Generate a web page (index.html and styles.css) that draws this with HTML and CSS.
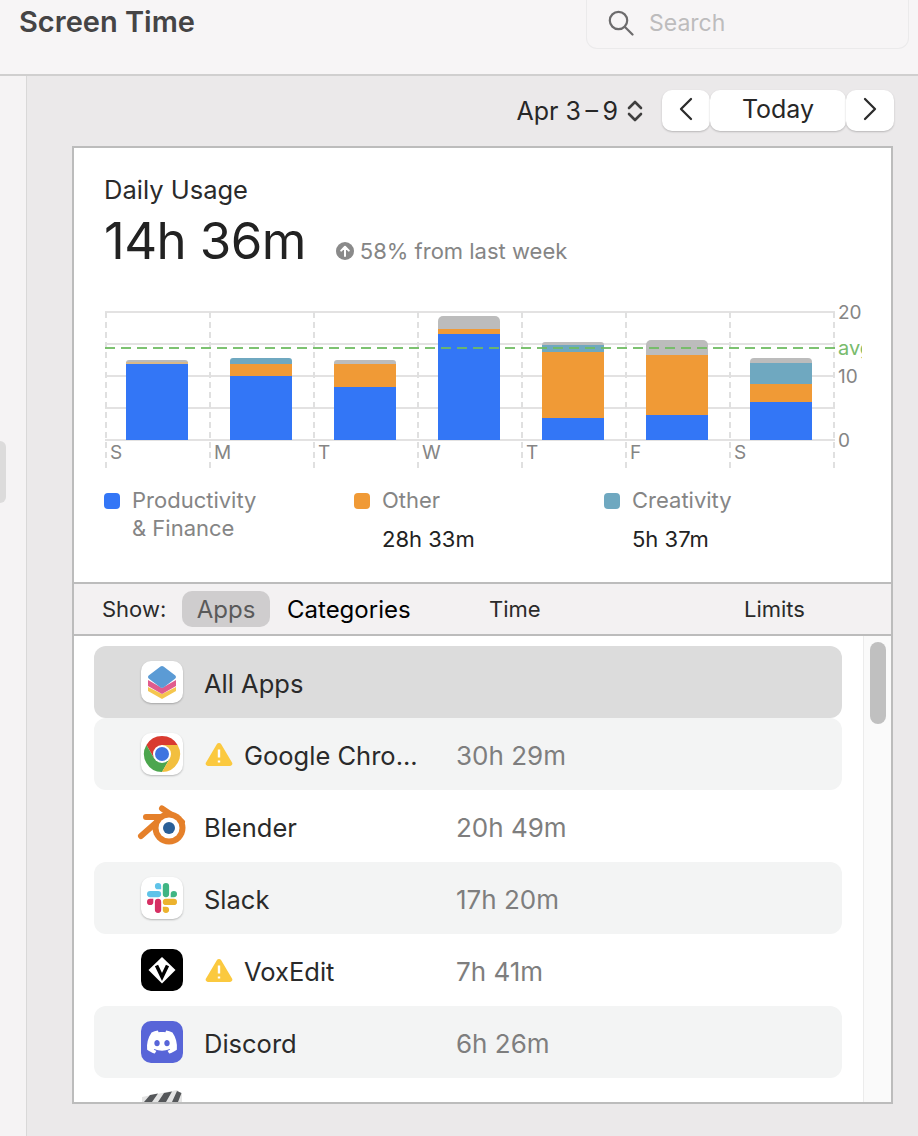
FILE: index.html
```html
<!DOCTYPE html>
<html lang="en">
<head>
<meta charset="utf-8">
<title>Screen Time</title>
<link rel="stylesheet" href="styles.css">
</head>
<body>
<header class="titlebar">
  <h1 class="title">Screen Time</h1>
  <div class="search">
    <svg class="search-icon" viewBox="0 0 26 26"><circle cx="10.5" cy="10.5" r="8.7"/><path d="M17 17l7.5 7.5"/></svg>
    <span>Search</span>
  </div>
</header>
<div class="window">
  <aside class="sidebar"><div class="sidebar-sel"></div></aside>
  <main class="content">
    <div class="toolbar">
      <span class="range">Apr 3&#8201;–&#8201;9</span>
      <svg class="stepper" viewBox="0 0 16 22"><path d="M2 8l6-6 6 6M2 14l6 6 6-6"/></svg>
      <button class="btn btn-icon"><svg viewBox="0 0 14 24"><path d="M12 2L2 12l10 10"/></svg></button>
      <button class="btn btn-today">Today</button>
      <button class="btn btn-icon"><svg viewBox="0 0 14 24"><path d="M2 2l10 10L2 22"/></svg></button>
    </div>
    <section class="card">
      <div class="usage">
        <div class="usage-title">Daily Usage</div>
        <div class="usage-line">
          <span class="usage-total">14h 36m</span>
          <svg class="delta-icon" viewBox="0 0 18 18"><circle cx="9" cy="9" r="9"/><path d="M9 14V5M5.2 8.6L9 4.8l3.8 3.8"/></svg>
          <span class="delta">58% from last week</span>
        </div>
        <svg class="chart" viewBox="104 304 758 176" width="758" height="176">
          <g class="grid">
            <path d="M105 312H835M105 344H835M105 376H835M105 408H835M105 440H835"/>
          </g>
          <g class="vgrid">
            <path d="M106 312V472M210 312V472M314 312V472M418 312V472M522 312V472M626 312V472M730 312V472M834 312V472"/>
          </g>
          <path class="s-grey" d="M126 364v-1a3 3 0 0 1 3-3h56a3 3 0 0 1 3 3v1z"/>
          <rect class="s-tan" x="126" y="362" width="62" height="2"/>
          <rect class="s-blue" x="126" y="364" width="62" height="76"/>

          <path class="s-teal" d="M230 364v-3a3 3 0 0 1 3-3h56a3 3 0 0 1 3 3v3z"/>
          <rect class="s-orange" x="230" y="364" width="62" height="12"/>
          <rect class="s-blue" x="230" y="376" width="62" height="64"/>

          <path class="s-grey" d="M334 364v-1a3 3 0 0 1 3-3h56a3 3 0 0 1 3 3v1z"/>
          <rect class="s-orange" x="334" y="364" width="62" height="23"/>
          <rect class="s-blue" x="334" y="387" width="62" height="53"/>

          <path class="s-grey" d="M438 329v-8a5 5 0 0 1 5-5h52a5 5 0 0 1 5 5v8z"/>
          <rect class="s-orange" x="438" y="329" width="62" height="5"/>
          <rect class="s-blue" x="438" y="334" width="62" height="106"/>

          <path class="s-grey" d="M542 346v-1a3 3 0 0 1 3-3h56a3 3 0 0 1 3 3v1z"/>
          <rect class="s-teal" x="542" y="345" width="62" height="7"/>
          <rect class="s-orange" x="542" y="352" width="62" height="66"/>
          <rect class="s-blue" x="542" y="418" width="62" height="22"/>

          <path class="s-grey" d="M646 355v-10a5 5 0 0 1 5-5h52a5 5 0 0 1 5 5v10z"/>
          <rect class="s-orange" x="646" y="355" width="62" height="60"/>
          <rect class="s-blue" x="646" y="415" width="62" height="25"/>

          <path class="s-grey" d="M750 364v-2a4 4 0 0 1 4-4h54a4 4 0 0 1 4 4v2z"/>
          <rect class="s-teal" x="750" y="363" width="62" height="21"/>
          <rect class="s-orange" x="750" y="384" width="62" height="18"/>
          <rect class="s-blue" x="750" y="402" width="62" height="38"/>

          <path class="avg" d="M105 348H835"/>
          <g class="day-labels">
            <text x="110" y="459">S</text><text x="214" y="459">M</text><text x="318" y="459">T</text><text x="422" y="459">W</text><text x="526" y="459">T</text><text x="630" y="459">F</text><text x="734" y="459">S</text>
          </g>
          <g class="axis-labels">
            <text x="838" y="319">20</text><text x="838" y="383">10</text><text x="838" y="447">0</text>
            <text class="avg-label" x="838" y="355">avg</text>
          </g>
        </svg>
        <div class="legend">
          <div class="legend-item">
            <span class="swatch swatch-blue"></span>
            <div><div class="legend-label">Productivity<br>&amp; Finance</div></div>
          </div>
          <div class="legend-item">
            <span class="swatch swatch-orange"></span>
            <div><div class="legend-label">Other</div><div class="legend-value">28h 33m</div></div>
          </div>
          <div class="legend-item">
            <span class="swatch swatch-teal"></span>
            <div><div class="legend-label">Creativity</div><div class="legend-value">5h 37m</div></div>
          </div>
        </div>
      </div>
      <div class="showbar">
        <span class="show-label">Show:</span>
        <span class="pill">Apps</span>
        <span class="cat">Categories</span>
        <span class="col-time">Time</span>
        <span class="col-limits">Limits</span>
      </div>
      <div class="list-wrap">
        <div class="list">
          <div class="row row-selected">
            <svg class="icon icon-tile" viewBox="0 0 42 42">
              <path class="st-yellow" d="M7 26l14 7 14-7v4l-14 8-14-8z"/>
              <path class="st-pink" d="M7 19l14 8 14-8v6l-14 8-14-8z"/>
              <path class="st-blue" d="M7 16a2 2 0 0 1 1-1.700L19.500 5.500a3 3 0 0 1 3 0L34 14.300a2 2 0 0 1 0 3.400L22.500 26.500a3 3 0 0 1-3 0L8 17.700a2 2 0 0 1-1-1.700z"/>
            </svg>
            <span class="name">All Apps</span>
          </div>
          <div class="row row-alt">
            <svg class="icon icon-tile" viewBox="0 0 42 42">
              <path class="c-red" d="M36.600 12A18 18 0 0 0 5.400 12L13.200 25.500 21 12z"/>
              <path class="c-green" d="M5.400 12A18 18 0 0 0 21 39L28.800 25.500 13.200 25.500z"/>
              <path class="c-yellow" d="M21 39A18 18 0 0 0 36.600 12H21L28.800 25.500z"/>
              <circle class="c-white" cx="21" cy="21" r="9"/>
              <circle class="c-blue" cx="21" cy="21" r="7"/>
            </svg>
            <svg class="warn" viewBox="0 0 28 24"><path class="warn-bg" d="M11.800 2.200a2.500 2.500 0 0 1 4.400 0l10.800 18.300a2.300 2.300 0 0 1-2 3.500H3a2.300 2.300 0 0 1-2-3.500z"/><path class="warn-mark" d="M14 7.500v8M14 18.500v2"/></svg>
            <span class="name name-warn">Google Chro...</span>
            <span class="time">30h 29m</span>
          </div>
          <div class="row">
            <svg class="icon icon-free" viewBox="0 0 42 42">
              <path class="b-arm" d="M21 3.500L41 17M5 12H30M0 31L17 16"/>
              <circle class="b-ring" cx="28" cy="23" r="16.500"/>
              <circle class="b-white" cx="28" cy="23" r="10.500"/>
              <circle class="b-blue" cx="28" cy="23" r="6"/>
            </svg>
            <span class="name">Blender</span>
            <span class="time">20h 49m</span>
          </div>
          <div class="row row-alt">
            <svg class="icon icon-tile" viewBox="0 0 42 42">
              <g transform="translate(6 6) scale(1.25)">
                <path class="sl-blue" d="M8.834 5.042a2.528 2.528 0 0 1-2.521-2.52A2.528 2.528 0 0 1 8.834 0a2.528 2.528 0 0 1 2.521 2.522v2.52H8.834zM8.834 6.313a2.528 2.528 0 0 1 2.521 2.521 2.528 2.528 0 0 1-2.521 2.521H2.522A2.528 2.528 0 0 1 0 8.834a2.528 2.528 0 0 1 2.522-2.521h6.312z"/>
                <path class="sl-green" d="M18.956 8.834a2.528 2.528 0 0 1 2.522-2.521A2.528 2.528 0 0 1 24 8.834a2.528 2.528 0 0 1-2.522 2.521h-2.522V8.834zM17.688 8.834a2.528 2.528 0 0 1-2.523 2.521 2.527 2.527 0 0 1-2.52-2.521V2.522A2.527 2.527 0 0 1 15.165 0a2.528 2.528 0 0 1 2.523 2.522v6.312z"/>
                <path class="sl-yellow" d="M15.165 18.956a2.528 2.528 0 0 1 2.523 2.522A2.528 2.528 0 0 1 15.165 24a2.527 2.527 0 0 1-2.52-2.522v-2.522h2.52zM15.165 17.688a2.527 2.527 0 0 1-2.52-2.523 2.526 2.526 0 0 1 2.52-2.52h6.313A2.527 2.527 0 0 1 24 15.165a2.528 2.528 0 0 1-2.522 2.523h-6.313z"/>
                <path class="sl-red" d="M5.042 15.165a2.528 2.528 0 0 1-2.52 2.523A2.528 2.528 0 0 1 0 15.165a2.527 2.527 0 0 1 2.522-2.52h2.52v2.52zM6.313 15.165a2.527 2.527 0 0 1 2.521-2.52 2.527 2.527 0 0 1 2.521 2.52v6.313A2.528 2.528 0 0 1 8.834 24a2.528 2.528 0 0 1-2.521-2.522v-6.313z"/>
              </g>
            </svg>
            <span class="name">Slack</span>
            <span class="time">17h 20m</span>
          </div>
          <div class="row">
            <svg class="icon icon-vox" viewBox="0 0 42 42">
              <path class="v-diamond" d="M21 8L34.500 21 21 34.500 7.500 21z"/>
              <path class="v-mark" d="M15.500 16.500L21 28l5.500-11.500"/>
            </svg>
            <svg class="warn" viewBox="0 0 28 24"><path class="warn-bg" d="M11.800 2.200a2.500 2.500 0 0 1 4.400 0l10.800 18.300a2.300 2.300 0 0 1-2 3.500H3a2.300 2.300 0 0 1-2-3.500z"/><path class="warn-mark" d="M14 7.500v8M14 18.500v2"/></svg>
            <span class="name name-warn">VoxEdit</span>
            <span class="time">7h 41m</span>
          </div>
          <div class="row row-alt">
            <svg class="icon icon-discord" viewBox="0 0 42 42">
              <g transform="translate(6 6) scale(1.25)">
                <path class="d-clyde" d="M20.317 4.3698a19.7913 19.7913 0 00-4.8851-1.5152.0741.0741 0 00-.0785.0371c-.211.3753-.4447.8648-.6083 1.2495-1.8447-.2762-3.68-.2762-5.4868 0-.1636-.3933-.4058-.8742-.6177-1.2495a.077.077 0 00-.0785-.037 19.7363 19.7363 0 00-4.8852 1.515.0699.0699 0 00-.0321.0277C.5334 9.0458-.319 13.5799.0992 18.0578a.0824.0824 0 00.0312.0561c2.0528 1.5076 4.0413 2.4228 5.9929 3.0294a.0777.0777 0 00.0842-.0276c.4616-.6304.8731-1.2952 1.226-1.9942a.076.076 0 00-.0416-.1057c-.6528-.2476-1.2743-.5495-1.8722-.8923a.077.077 0 01-.0076-.1277c.1258-.0943.2517-.1923.3718-.2914a.0743.0743 0 01.0776-.0105c3.9278 1.7933 8.18 1.7933 12.0614 0a.0739.0739 0 01.0785.0095c.1202.099.246.1981.3728.2924a.077.077 0 01-.0066.1276 12.2986 12.2986 0 01-1.873.8914.0766.0766 0 00-.0407.1067c.3604.698.7719 1.3628 1.225 1.9932a.076.076 0 00.0842.0286c1.961-.6067 3.9495-1.5219 6.0023-3.0294a.077.077 0 00.0313-.0552c.5004-5.177-.8382-9.6739-3.5485-13.6604a.061.061 0 00-.0312-.0286zM8.02 15.3312c-1.1825 0-2.1569-1.0857-2.1569-2.419 0-1.3332.9555-2.4189 2.157-2.4189 1.2108 0 2.1757 1.0952 2.1568 2.419 0 1.3332-.9555 2.4189-2.1569 2.4189zm7.9748 0c-1.1825 0-2.1569-1.0857-2.1569-2.419 0-1.3332.9554-2.4189 2.1569-2.4189 1.2108 0 2.1757 1.0952 2.1568 2.419 0 1.3332-.946 2.4189-2.1568 2.4189Z"/>
              </g>
            </svg>
            <span class="name">Discord</span>
            <span class="time">6h 26m</span>
          </div>
          <div class="row">
            <svg class="icon-clap" viewBox="0 0 42 48">
              <path class="cl-board" d="M1 14V7L36 0l5 4v10z"/>
              <path class="cl-stripe" d="M3 12L9 5l8-1.500L11 12zM17 12L23 3l8-1.500L25 12zM31 12L36 1l4.500 2L37 12z"/>
            </svg>
          </div>
        </div>
        <div class="scrolltrack"><div class="scrollthumb"></div></div>
      </div>
    </section>
  </main>
</div>
</body>
</html>
```
FILE: styles.css
```css
* { box-sizing: border-box; }
html, body { margin: 0; padding: 0; }
body {
  width: 918px;
  height: 1136px;
  overflow: hidden;
  background: #ebe9ea;
  font-family: Inter, "Liberation Sans", sans-serif;
  color: #242424;
}

.titlebar {
  height: 76px;
  display: flex;
  justify-content: space-between;
  align-items: flex-start;
  background: #f7f5f6;
  border-bottom: 2px solid #d0cfcf;
  padding: 0 9px 0 19px;
}
.title {
  margin: 5px 0 0;
  font-size: 29px;
  line-height: 34px;
  font-weight: 600;
  color: #454445;
}
.search {
  width: 323px;
  height: 49px;
  display: flex;
  align-items: center;
  gap: 15px;
  padding: 0 0 2px 21px;
  border: 1px solid #ebeaeb;
  border-top: 0;
  border-radius: 0 0 11px 11px;
  font-size: 23px;
  color: #bdbcbd;
}
.search-icon { width: 26px; height: 26px; fill: none; stroke: #6d6c6d; stroke-width: 2.2; stroke-linecap: round; }

.window { display: flex; height: 1060px; }
.sidebar {
  width: 27px;
  flex: none;
  background: #f5f3f4;
  border-right: 1px solid #d9d8d8;
  padding-top: 365px;
}
.sidebar-sel { width: 6px; height: 62px; background: #dcdbdb; border-radius: 0 7px 7px 0; }
.content { flex: 1; padding: 14px 24px 0 45px; }

.toolbar { height: 41px; display: flex; align-items: center; justify-content: flex-end; }
.range { font-size: 25px; color: #272727; margin-right: 9px; }
.stepper { width: 16px; height: 22px; margin-right: 19px; fill: none; stroke: #3f3f3f; stroke-width: 2.6; stroke-linecap: round; stroke-linejoin: round; }
.btn {
  height: 41px;
  border: 0;
  padding: 0 0 3px;
  background: #fff;
  border-radius: 10px;
  box-shadow: 0 1px 2px rgba(0,0,0,.22);
  font: inherit;
  font-size: 25px;
  color: #272727;
  display: flex;
  align-items: center;
  justify-content: center;
}
.btn-icon { width: 48px; }
.btn-icon svg { width: 14px; height: 24px; fill: none; stroke: #2c2c2c; stroke-width: 2.3; stroke-linecap: round; stroke-linejoin: round; }
.btn-today { width: 136px; }

.card {
  margin-top: 15px;
  height: 958px;
  width: 821px;
  background: #fff;
  border: 2px solid #bcbcbc;
  display: flex;
  flex-direction: column;
}
.usage { height: 434px; flex: none; padding: 27px 0 0 30px; }
.usage-title { font-size: 25.5px; line-height: 30px; color: #2a2a2a; }
.usage-line { display: flex; align-items: baseline; height: 60px; line-height: 60px; margin-top: 6px; }
.usage-total { font-size: 51px; color: #222; margin-right: 30px; letter-spacing: -0.6px; }
.delta-icon { width: 18px; height: 18px; margin-right: 6px; align-self: center; margin-top: 20px; }
.delta-icon circle { fill: #8a8a8a; }
.delta-icon path { fill: none; stroke: #fff; stroke-width: 2; stroke-linecap: round; stroke-linejoin: round; }
.delta { font-size: 22px; color: #858585; }

.chart { display: block; margin: 33px 0 0 0; }
.grid path { fill: none; stroke: #e3e2e2; stroke-width: 2; }
.vgrid path { fill: none; stroke: #e0e0e0; stroke-width: 2; stroke-dasharray: 6 4; }
.s-blue { fill: #3376f6; }
.s-orange { fill: #f09a36; }
.s-tan { fill: #d9b98a; }
.s-teal { fill: #6fa8c0; }
.s-grey { fill: #bcbcbc; }
.avg { fill: none; stroke: #6fbb62; stroke-width: 2; stroke-dasharray: 10 6; opacity: .9; }
.day-labels text, .axis-labels text { font-size: 19px; fill: #858585; font-family: Inter, "Liberation Sans", sans-serif; }
.axis-labels .avg-label { fill: #78bb6c; font-size: 20px; }

.legend { display: grid; grid-template-columns: 250px 250px 250px; margin-top: 6px; }
.legend-item { display: flex; gap: 12px; }
.swatch { width: 16px; height: 16px; border-radius: 4px; margin-top: 7px; flex: none; }
.swatch-blue { background: #3376f6; }
.swatch-orange { background: #f09a36; }
.swatch-teal { background: #6fa8c0; }
.legend-label { font-size: 22px; line-height: 28px; color: #858585; }
.legend-value { font-size: 22px; line-height: 28px; margin-top: 11px; color: #222; }

.showbar {
  height: 54px;
  flex: none;
  display: flex;
  align-items: center;
  background: #f3f1f2;
  border-top: 2px solid #bcbcbc;
  border-bottom: 2px solid #bcbcbc;
  padding-left: 28px;
  font-size: 22px;
  color: #2a2a2a;
}
.show-label { width: 80px; }
.pill {
  width: 88px;
  height: 36px;
  display: flex;
  align-items: center;
  justify-content: center;
  background: #cfcdce;
  border-radius: 10px;
  font-size: 24px;
  color: #5a5a5a;
}
.cat { margin-left: 17px; width: 202px; font-size: 24px; font-weight: 400; color: #000; }
.col-time { width: 255px; }

.list-wrap { flex: 1; min-height: 0; display: flex; overflow: hidden; }
.list { width: 789px; flex: none; padding: 10px 0 0 20px; overflow: hidden; }
.row {
  width: 748px;
  height: 72px;
  display: flex;
  align-items: center;
  padding-left: 47px;
  border-radius: 12px;
  font-size: 25.5px;
  color: #2a2a2a;
}
.row-selected { background: #dcdcdc; }
.row-alt { background: #f3f4f4; }
.icon { width: 42px; height: 42px; flex: none; overflow: visible; }
.icon-tile { background: #fff; border-radius: 10px; box-shadow: 0 1px 2px rgba(0,0,0,.25); }
.icon-vox { background: #000; border-radius: 10px; }
.icon-discord { background: #5865d8; border-radius: 10px; }
.icon-clap { width: 42px; height: 48px; flex: none; }
.warn { width: 28px; height: 24px; flex: none; margin-left: 22px; }
.warn-bg { fill: #fbc93f; }
.warn-mark { fill: none; stroke: #fff; stroke-width: 2.4; }
.name { margin: 2px 0 0 21px; width: 252px; flex: none; }
.name-warn { margin-left: 11px; width: 212px; }
.time { margin-top: 2px; font-size: 26px; color: #7e7e7e; }

.st-blue { fill: #5b9bd5; }
.st-pink { fill: #e05c8d; }
.st-yellow { fill: #f5c64f; }
.c-red { fill: #d93a2f; }
.c-green { fill: #4ca64e; }
.c-yellow { fill: #f2bf3f; }
.c-white { fill: #fff; }
.c-blue { fill: #3f74e0; }
.b-arm { fill: none; stroke: #e5802a; stroke-width: 6; stroke-linecap: round; }
.b-ring { fill: #e5802a; }
.b-white { fill: #fff; }
.b-blue { fill: #2a5f97; }
.sl-blue { fill: #5fc3e8; }
.sl-green { fill: #3fb583; }
.sl-yellow { fill: #ecb22e; }
.sl-red { fill: #d62f63; }
.v-diamond { fill: #fff; }
.v-mark { fill: none; stroke: #000; stroke-width: 3.5; stroke-linejoin: miter; }
.d-clyde { fill: #fff; }
.cl-board { fill: #e4e4e4; }
.cl-stripe { fill: #55575a; }

.scrolltrack {
  flex: 1;
  background: #fafafa;
  border-left: 1px solid #ececec;
  padding: 6px 0 0 6px;
}
.scrollthumb { width: 16px; height: 82px; border-radius: 8px; background: #c0c0c0; }
```
